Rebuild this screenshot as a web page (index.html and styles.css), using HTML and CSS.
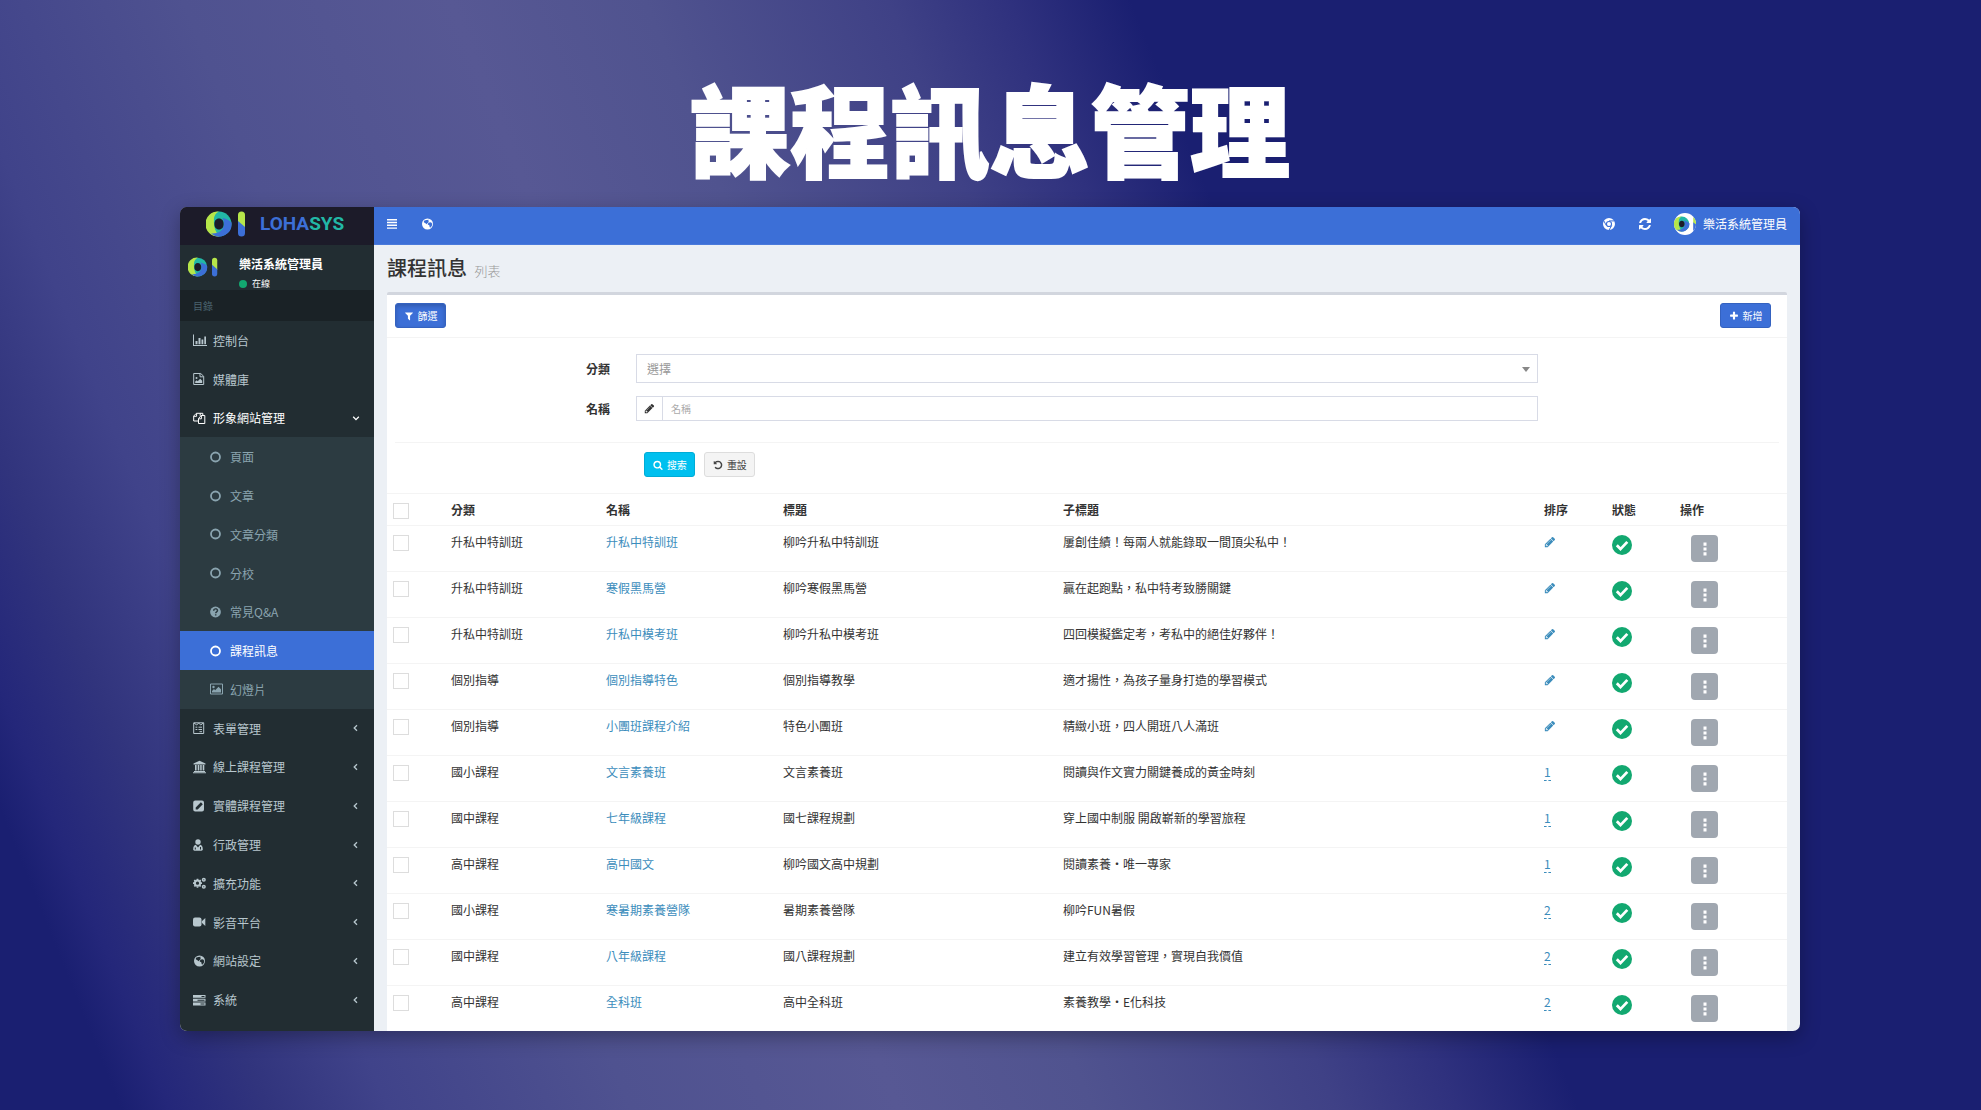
FILE: index.html
```html
<!DOCTYPE html>
<html lang="zh-Hant">
<head>
    <meta charset="UTF-8">
    <meta name="viewport" content="width=device-width, initial-scale=1.0">
    <title>課程訊息管理</title>
    <link rel="stylesheet" href="styles.css">
</head>
<body>
    <!-- icon sprite -->
    <svg class="sprite" aria-hidden="true">
        <symbol id="i-logo" viewBox="0 0 40 26">
            <circle cx="13" cy="13" r="12.5" fill="#22b8a6"/>
            <path d="M13 .5C10 2 7.500 5 8 10c-.5 5 1 10 5 15.400A12.500 12.500 0 1 1 13 .5z" fill="#b6e64a"/>
            <path d="M25.500 11.500A12.500 12.500 0 0 1 5 22.600c5 0 10-1 12-5.600 1.500-3 1-7-.5-10 3 .5 6.500 2 9 4.500z" fill="#3c6fd7"/>
            <path class="hole" d="M13 7.500c3 0 4.600 2.300 4.600 5.500s-1.600 5.500-4.600 5.500S8.400 16.200 8.400 13 10 7.500 13 7.500z"/>
            <path d="M32 4a3.500 3.500 0 0 1 7 0v13l-7-6z" fill="#b6e64a"/>
            <path d="M32 10l7 6v6a3.500 3.500 0 0 1-7 0z" fill="#3c6fd7"/>
        </symbol>
        <symbol id="i-bars" viewBox="0 0 14 14"><path d="M2 2h10v1.400H2zM2 4.800h10v1.400H2zM2 7.600h10v1.400H2zM2 10.400h10v1.400H2z"/></symbol>
        <symbol id="i-globe" viewBox="0 0 14 14"><path fill-rule="evenodd" d="M6.500 1.500a5.500 5.500 0 1 1 0 11 5.500 5.500 0 0 1 0-11zM5.200 3L3 3.800l-.2 1.500 1.600 1 1.400 1 .6-1 1.400-1.200-.6-1.600 1.200-.8zM9 5.200l-1.700.9-.6 1.500 1.600.7.400 2 1 .3 1.300-2 .2-1.900-1-1.200z"/></symbol>
        <symbol id="i-chrome" viewBox="0 0 14 14"><path fill-rule="evenodd" d="M7 1a6 6 0 1 1 0 12A6 6 0 0 1 7 1zm0 2.900a3.100 3.100 0 1 0 0 6.200 3.100 3.100 0 0 0 0-6.200zM7 5a2 2 0 1 1 0 4 2 2 0 0 1 0-4z"/><path class="cut" d="M7 3.900h5.400M4.300 8.500L1.900 4M9.700 8.500L7.100 13"/></symbol>
        <symbol id="i-refresh" viewBox="0 0 1792 1792"><path d="M1639 1056q0 5-1 7-64 268-268 434.500t-478 166.500q-146 0-282.500-55t-243.500-157l-129 129q-19 19-45 19t-45-19-19-45v-448q0-26 19-45t45-19h448q26 0 45 19t19 45-19 45l-137 137q71 66 161 102t187 36q134 0 250-65t186-179q11-17 53-117 8-23 30-23h192q13 0 22.500 9.500t9.500 22.500zm25-800v448q0 26-19 45t-45 19h-448q-26 0-45-19t-19-45 19-45l138-138q-148-137-349-137-134 0-250 65t-186 179q-11 17-53 117-8 23-30 23h-199q-13 0-22.500-9.500t-9.500-22.500v-7q65-268 270-434.500t480-166.500q146 0 284 55.500t245 156.500l130-129q19-19 45-19t45 19 19 45z"/></symbol>
        <symbol id="i-filter" viewBox="0 0 1792 1792"><path d="M1595 295q17 41-14 70l-493 493v742q0 42-39 59-13 5-25 5-27 0-45-19l-256-256q-19-19-19-45v-486l-493-493q-31-29-14-70 17-39 59-39h1280q42 0 59 39z"/></symbol>
        <symbol id="i-plus" viewBox="0 0 1792 1792"><path d="M1600 736v192q0 40-28 68t-68 28h-416v416q0 40-28 68t-68 28h-192q-40 0-68-28t-28-68v-416h-416q-40 0-68-28t-28-68v-192q0-40 28-68t68-28h416v-416q0-40 28-68t68-28h192q40 0 68 28t28 68v416h416q40 0 68 28t28 68z"/></symbol>
        <symbol id="i-search" viewBox="0 0 1792 1792"><path d="M1216 832q0-185-131.500-316.500t-316.500-131.500-316.500 131.500-131.500 316.500 131.500 316.500 316.500 131.500 316.500-131.500 131.500-316.500zm512 832q0 52-38 90t-90 38q-54 0-90-38l-343-342q-179 124-399 124-143 0-273.500-55.500t-225-150-150-225-55.500-273.500 55.500-273.500 150-225 225-150 273.500-55.500 273.500 55.500 225 150 150 225 55.500 273.500q0 220-124 399l343 343q37 37 37 90z"/></symbol>
        <symbol id="i-undo" viewBox="0 0 1792 1792"><path d="M1664 896q0 156-61 298t-164 245-245 164-298 61q-172 0-327-72.500t-264-204.500q-7-10-6.500-22.500t8.500-20.500l137-138q10-9 25-9 16 2 23 12 73 95 179 147t225 52q104 0 198.500-40.500t163.500-109.500 109.500-163.500 40.500-198.500-40.500-198.500-109.500-163.500-163.500-109.500-198.500-40.500q-98 0-188 35.500t-160 101.500l137 138q31 30 14 69-17 40-59 40h-448q-26 0-45-19t-19-45v-448q0-42 40-59 39-17 69 14l130 129q107-101 244.500-156.500t284.500-55.500q156 0 298 61t245 164 164 245 61 298z"/></symbol>
        <symbol id="i-pencil" viewBox="0 0 1792 1792"><path d="M491 1536l91-91-235-235-91 91v107h128v128h107zm523-928q0-22-22-22-10 0-17 7l-542 542q-7 7-7 17 0 22 22 22 10 0 17-7l542-542q7-7 7-17zm-54-192l416 416-832 832h-416v-416zm683 96q0 53-37 90l-166 166-416-416 166-165q36-38 90-38 53 0 91 38l235 234q37 39 37 91z"/></symbol>
        <symbol id="i-check" viewBox="0 0 20 20"><circle cx="10" cy="10" r="10"/><path d="M4.800 10.300l3.700 3.800 6.800-7.200" fill="none" stroke="#fff" stroke-width="2.800"/></symbol>
        <symbol id="i-dots" viewBox="0 0 4 14"><path d="M.5 .5h3v3.200h-3zM.5 5.400h3v3.200h-3zM.5 10.300h3v3.200h-3z"/></symbol>
        <symbol id="i-left" viewBox="0 0 14 14"><path class="line" stroke-width="1.300" d="M8 4.200L5.200 7 8 9.800"/></symbol>
        <symbol id="i-down" viewBox="0 0 14 14"><path class="line" stroke-width="1.300" d="M4.200 5.800L7 8.600l2.800-2.800"/></symbol>
        <symbol id="i-ring" viewBox="0 0 14 14"><circle class="line" cx="5.500" cy="7" r="4.500" stroke-width="1.800"/></symbol>
        <symbol id="i-question" viewBox="0 0 14 14"><circle cx="5.500" cy="7" r="5.400"/><path d="M3.700 5.700c0-2.400 3.800-2.400 3.800-.2 0 1.400-1.800 1.300-1.800 2.700M5.700 9.300v1.300" fill="none" stroke="#2c3b41" stroke-width="1.500"/></symbol>
        <symbol id="i-image" viewBox="0 0 14 14"><path class="line" d="M.5 2h12v10H.5z"/><circle cx="3.500" cy="5" r="1.200"/><path d="M2 10.500V9l2-2 1.200 1.200L8.500 4.800 11 7.300v3.200z"/></symbol>
        <symbol id="i-chart" viewBox="0 0 14 14"><path d="M0 1.500h1v10.500h13v1H0zM2.500 8h2v3.200h-2zM5.500 5h2v6.200h-2zM8.500 6.500h1.800v4.700H8.500zM11.300 3.500h1.700v7.700h-1.700z"/></symbol>
        <symbol id="i-file" viewBox="0 0 14 14"><path class="line" d="M.7 1.500h7l3 2.800v8.200H.7zM7 1.500v3.300h3.500"/><circle cx="3.500" cy="6" r="1"/><path d="M2.200 11V9.500l1.500-1.200 1 .9 2.500-2.400 2 1.900V11z"/></symbol>
        <symbol id="i-copy" viewBox="0 0 14 14"><path class="line" d="M5 10H.7V5l2.700-2.700h3.800v2.500M3.600 2.500v2.800H.9M5.500 12.500v-5L8.200 4.500h3.600v8zM8.400 4.500v3.300H5.500M7 2.300h2.800v2"/></symbol>
        <symbol id="i-form" viewBox="0 0 14 14"><path class="line" d="M.7 1.800h10v10.700h-10zM1 2l2.700 2 2-2 2 2 2.600-2M2.500 6.200h1.800M5.500 6.200H9M2.500 8.500h1.800M5.500 8.500H9M6.500 10.700H9"/></symbol>
        <symbol id="i-bank" viewBox="0 0 14 14"><path d="M6.500 .8L12.500 3.500v1H.5v-1zM2 5h1.600v5.500H2zM4.700 5h1.600v5.500H4.700zM7.200 5h1.500v5.500H7.200zM9.700 5h1.600v5.500H9.700zM1 11h11v1H1zM0 12.300h13v1H0z"/></symbol>
        <symbol id="i-edit" viewBox="0 0 14 14"><path fill-rule="evenodd" d="M2.200 1.500h6.800A2 2 0 0 1 11 3.500v7a2 2 0 0 1-2 2H2.200a2 2 0 0 1-2-2v-7a2 2 0 0 1 2-2zM7.900 3.200L2.700 8.500v2h2l5.100-5.300z"/></symbol>
        <symbol id="i-user" viewBox="0 0 14 14"><circle cx="5" cy="4" r="2.700"/><path fill-rule="evenodd" d="M2.800 6.800C1 7.200.2 8.600.2 11.500c0 .7.600 1.200 1.300 1.200h7c.7 0 1.300-.5 1.300-1.200 0-2.900-.8-4.300-2.600-4.700L5 9.500zM1.800 9.500h1v2h-1zM7 9h1v2.500H7z"/></symbol>
        <symbol id="i-cogs" viewBox="0 0 14 14"><circle class="line" cx="4.500" cy="7.200" r="2.600" stroke-width="2"/><path class="line" stroke-width="1.700" d="M4.500 2.700v1.300M4.500 10.400v1.300M0 7.200h1.300M7.700 7.200H9M1.300 4l.9.900M6.800 9.500l.9.900M7.700 4l-.9.900M2.200 9.500l-.9.900"/><circle class="line" cx="10.800" cy="3.700" r="1.300" stroke-width="1.500"/><circle class="line" cx="10.800" cy="10.700" r="1.300" stroke-width="1.500"/></symbol>
        <symbol id="i-video" viewBox="0 0 14 14"><rect y="2.500" width="8.500" height="9" rx="2"/><path d="M8.800 6.200L12.300 3v8L8.800 7.800z"/></symbol>
        <symbol id="i-server" viewBox="0 0 14 14"><path fill-rule="evenodd" d="M0 2h12.500v2.800H0zM8.500 2.900h3v1h-3zM0 5.800h12.500v2.800H0zM4.500 6.700h7v1h-7zM0 9.600h12.500v2.800H0zM7.500 10.500h4v1h-4z"/></symbol>
    </svg>

    <h1 class="page-title">課程訊息管理</h1>

    <div class="window">
        <aside class="sidebar">
            <a class="brand" href="#">
                <svg class="brand-logo"><use href="#i-logo"/></svg>
                <span class="brand-name">LOHA<span>SYS</span></span>
            </a>
            <div class="user-panel">
                <svg class="user-logo"><use href="#i-logo"/></svg>
                <div>
                    <p class="user-name">樂活系統管理員</p>
                    <a class="user-status" href="#"><i></i>在線</a>
                </div>
            </div>
            <div class="menu-header">目錄</div>
            <ul class="menu">
                <li><a href="#"><svg class="icon"><use href="#i-chart"/></svg>控制台</a></li>
                <li><a href="#"><svg class="icon"><use href="#i-file"/></svg>媒體庫</a></li>
                <li class="open"><a href="#"><svg class="icon"><use href="#i-copy"/></svg>形象網站管理<svg class="icon arrow"><use href="#i-down"/></svg></a></li>
                <li class="sub"><a href="#"><svg class="icon"><use href="#i-ring"/></svg>頁面</a></li>
                <li class="sub"><a href="#"><svg class="icon"><use href="#i-ring"/></svg>文章</a></li>
                <li class="sub"><a href="#"><svg class="icon"><use href="#i-ring"/></svg>文章分類</a></li>
                <li class="sub"><a href="#"><svg class="icon"><use href="#i-ring"/></svg>分校</a></li>
                <li class="sub"><a href="#"><svg class="icon"><use href="#i-question"/></svg>常見Q&amp;A</a></li>
                <li class="sub active"><a href="#"><svg class="icon"><use href="#i-ring"/></svg>課程訊息</a></li>
                <li class="sub"><a href="#"><svg class="icon"><use href="#i-image"/></svg>幻燈片</a></li>
                <li><a href="#"><svg class="icon"><use href="#i-form"/></svg>表單管理<svg class="icon arrow"><use href="#i-left"/></svg></a></li>
                <li><a href="#"><svg class="icon"><use href="#i-bank"/></svg>線上課程管理<svg class="icon arrow"><use href="#i-left"/></svg></a></li>
                <li><a href="#"><svg class="icon"><use href="#i-edit"/></svg>實體課程管理<svg class="icon arrow"><use href="#i-left"/></svg></a></li>
                <li><a href="#"><svg class="icon"><use href="#i-user"/></svg>行政管理<svg class="icon arrow"><use href="#i-left"/></svg></a></li>
                <li><a href="#"><svg class="icon"><use href="#i-cogs"/></svg>擴充功能<svg class="icon arrow"><use href="#i-left"/></svg></a></li>
                <li><a href="#"><svg class="icon"><use href="#i-video"/></svg>影音平台<svg class="icon arrow"><use href="#i-left"/></svg></a></li>
                <li><a href="#"><svg class="icon"><use href="#i-globe"/></svg>網站設定<svg class="icon arrow"><use href="#i-left"/></svg></a></li>
                <li><a href="#"><svg class="icon"><use href="#i-server"/></svg>系統<svg class="icon arrow"><use href="#i-left"/></svg></a></li>
            </ul>
        </aside>

        <main class="main">
            <nav class="topbar">
                <a href="#" aria-label="選單"><svg class="icon"><use href="#i-bars"/></svg></a>
                <a href="#" aria-label="網站"><svg class="icon"><use href="#i-globe"/></svg></a>
                <a class="push" href="#" aria-label="瀏覽器"><svg class="icon"><use href="#i-chrome"/></svg></a>
                <a href="#" aria-label="重新整理"><svg class="icon"><use href="#i-refresh"/></svg></a>
                <a class="account" href="#"><span class="avatar"><svg><use href="#i-logo"/></svg></span>樂活系統管理員</a>
            </nav>

            <header class="content-header">
                <h2>課程訊息 <small>列表</small></h2>
            </header>

            <section class="box">
                <div class="box-header">
                    <button class="btn btn-primary pressed" type="button"><svg class="icon"><use href="#i-filter"/></svg>篩選</button>
                    <button class="btn btn-primary" type="button"><svg class="icon"><use href="#i-plus"/></svg>新增</button>
                </div>

                <form class="filter">
                    <div class="field">
                        <label for="category">分類</label>
                        <div class="select">
                            <select id="category"><option>選擇</option></select>
                        </div>
                    </div>
                    <div class="field">
                        <label for="name">名稱</label>
                        <div class="input-group">
                            <span class="addon"><svg class="icon"><use href="#i-pencil"/></svg></span>
                            <input type="text" id="name" placeholder="名稱">
                        </div>
                    </div>
                    <div class="filter-footer">
                        <button class="btn btn-info" type="button"><svg class="icon"><use href="#i-search"/></svg>搜索</button>
                        <button class="btn btn-default" type="reset"><svg class="icon"><use href="#i-undo"/></svg>重設</button>
                    </div>
                </form>

                <table class="grid">
                    <colgroup>
                        <col class="c-check"><col class="c-cat"><col class="c-name"><col class="c-title"><col><col class="c-num"><col class="c-num"><col class="c-act">
                    </colgroup>
                    <thead>
                        <tr>
                            <th><input type="checkbox" aria-label="全選"></th>
                            <th>分類</th>
                            <th>名稱</th>
                            <th>標題</th>
                            <th>子標題</th>
                            <th>排序</th>
                            <th>狀態</th>
                            <th>操作</th>
                        </tr>
                    </thead>
                    <tbody>
                        <tr>
                            <td><input type="checkbox" aria-label="選取"></td>
                            <td>升私中特訓班</td>
                            <td><a href="#">升私中特訓班</a></td>
                            <td>柳吟升私中特訓班</td>
                            <td>屢創佳績！每兩人就能錄取一間頂尖私中！</td>
                            <td><a href="#" aria-label="編輯"><svg class="icon"><use href="#i-pencil"/></svg></a></td>
                            <td><svg class="check"><use href="#i-check"/></svg></td>
                            <td><button class="more" type="button" aria-label="操作"><svg><use href="#i-dots"/></svg></button></td>
                        </tr>
                        <tr>
                            <td><input type="checkbox" aria-label="選取"></td>
                            <td>升私中特訓班</td>
                            <td><a href="#">寒假黑馬營</a></td>
                            <td>柳吟寒假黑馬營</td>
                            <td>贏在起跑點，私中特考致勝關鍵</td>
                            <td><a href="#" aria-label="編輯"><svg class="icon"><use href="#i-pencil"/></svg></a></td>
                            <td><svg class="check"><use href="#i-check"/></svg></td>
                            <td><button class="more" type="button" aria-label="操作"><svg><use href="#i-dots"/></svg></button></td>
                        </tr>
                        <tr>
                            <td><input type="checkbox" aria-label="選取"></td>
                            <td>升私中特訓班</td>
                            <td><a href="#">升私中模考班</a></td>
                            <td>柳吟升私中模考班</td>
                            <td>四回模擬鑑定考，考私中的絕佳好夥伴！</td>
                            <td><a href="#" aria-label="編輯"><svg class="icon"><use href="#i-pencil"/></svg></a></td>
                            <td><svg class="check"><use href="#i-check"/></svg></td>
                            <td><button class="more" type="button" aria-label="操作"><svg><use href="#i-dots"/></svg></button></td>
                        </tr>
                        <tr>
                            <td><input type="checkbox" aria-label="選取"></td>
                            <td>個別指導</td>
                            <td><a href="#">個別指導特色</a></td>
                            <td>個別指導教學</td>
                            <td>適才揚性，為孩子量身打造的學習模式</td>
                            <td><a href="#" aria-label="編輯"><svg class="icon"><use href="#i-pencil"/></svg></a></td>
                            <td><svg class="check"><use href="#i-check"/></svg></td>
                            <td><button class="more" type="button" aria-label="操作"><svg><use href="#i-dots"/></svg></button></td>
                        </tr>
                        <tr>
                            <td><input type="checkbox" aria-label="選取"></td>
                            <td>個別指導</td>
                            <td><a href="#">小團班課程介紹</a></td>
                            <td>特色小團班</td>
                            <td>精緻小班，四人開班八人滿班</td>
                            <td><a href="#" aria-label="編輯"><svg class="icon"><use href="#i-pencil"/></svg></a></td>
                            <td><svg class="check"><use href="#i-check"/></svg></td>
                            <td><button class="more" type="button" aria-label="操作"><svg><use href="#i-dots"/></svg></button></td>
                        </tr>
                        <tr>
                            <td><input type="checkbox" aria-label="選取"></td>
                            <td>國小課程</td>
                            <td><a href="#">文言素養班</a></td>
                            <td>文言素養班</td>
                            <td>閱讀與作文實力關鍵養成的黃金時刻</td>
                            <td><a class="order" href="#">1</a></td>
                            <td><svg class="check"><use href="#i-check"/></svg></td>
                            <td><button class="more" type="button" aria-label="操作"><svg><use href="#i-dots"/></svg></button></td>
                        </tr>
                        <tr>
                            <td><input type="checkbox" aria-label="選取"></td>
                            <td>國中課程</td>
                            <td><a href="#">七年級課程</a></td>
                            <td>國七課程規劃</td>
                            <td>穿上國中制服 開啟嶄新的學習旅程</td>
                            <td><a class="order" href="#">1</a></td>
                            <td><svg class="check"><use href="#i-check"/></svg></td>
                            <td><button class="more" type="button" aria-label="操作"><svg><use href="#i-dots"/></svg></button></td>
                        </tr>
                        <tr>
                            <td><input type="checkbox" aria-label="選取"></td>
                            <td>高中課程</td>
                            <td><a href="#">高中國文</a></td>
                            <td>柳吟國文高中規劃</td>
                            <td>閱讀素養‧唯一專家</td>
                            <td><a class="order" href="#">1</a></td>
                            <td><svg class="check"><use href="#i-check"/></svg></td>
                            <td><button class="more" type="button" aria-label="操作"><svg><use href="#i-dots"/></svg></button></td>
                        </tr>
                        <tr>
                            <td><input type="checkbox" aria-label="選取"></td>
                            <td>國小課程</td>
                            <td><a href="#">寒暑期素養營隊</a></td>
                            <td>暑期素養營隊</td>
                            <td>柳吟FUN暑假</td>
                            <td><a class="order" href="#">2</a></td>
                            <td><svg class="check"><use href="#i-check"/></svg></td>
                            <td><button class="more" type="button" aria-label="操作"><svg><use href="#i-dots"/></svg></button></td>
                        </tr>
                        <tr>
                            <td><input type="checkbox" aria-label="選取"></td>
                            <td>國中課程</td>
                            <td><a href="#">八年級課程</a></td>
                            <td>國八課程規劃</td>
                            <td>建立有效學習管理，實現自我價值</td>
                            <td><a class="order" href="#">2</a></td>
                            <td><svg class="check"><use href="#i-check"/></svg></td>
                            <td><button class="more" type="button" aria-label="操作"><svg><use href="#i-dots"/></svg></button></td>
                        </tr>
                        <tr>
                            <td><input type="checkbox" aria-label="選取"></td>
                            <td>高中課程</td>
                            <td><a href="#">全科班</a></td>
                            <td>高中全科班</td>
                            <td>素養教學‧E化科技</td>
                            <td><a class="order" href="#">2</a></td>
                            <td><svg class="check"><use href="#i-check"/></svg></td>
                            <td><button class="more" type="button" aria-label="操作"><svg><use href="#i-dots"/></svg></button></td>
                        </tr>
                    </tbody>
                </table>
            </section>
        </main>
    </div>
</body>
</html>
```

FILE: styles.css
```css
* {
    box-sizing: border-box;
}
body {
    margin: 0;
    min-height: 100vh;
    padding: 75px 181px 78px 180px;
    background: linear-gradient(68deg, #1a1f71 5%, #24277a 7%, #31347d 11%, #40438a 16%, #4f5290 26%, #575894 37%, #50538f 45%, #3f4186 55%, #2f317e 60%, #1a1f71 65%);
    font-family: "Noto Sans CJK TC", sans-serif;
    font-size: 12px;
    line-height: 17px;
    color: #333;
}
a {
    color: #3c8dbc;
    text-decoration: none;
}
button, input, select {
    font-family: inherit;
}
.sprite {
    position: absolute;
    width: 0;
    height: 0;
}
.icon {
    width: 14px;
    height: 14px;
    flex: none;
    fill: currentColor;
}
.line {
    fill: none;
    stroke: currentColor;
}
.cut {
    fill: none;
    stroke: #3c6fd7;
}
.hole {
    fill: #1c1b29;
}
.page-title {
    margin: 0 0 28px;
    font-size: 100px;
    line-height: 104px;
    font-weight: 900;
    text-align: center;
    color: #fff;
    -webkit-text-stroke: 2px #fff;
}
.window {
    display: flex;
    border-radius: 7px;
    overflow: hidden;
    background: #ecf0f5;
    box-shadow: 0 6px 20px rgba(0, 0, 0, 0.3);
}

/* sidebar */
.sidebar {
    width: 194px;
    flex: none;
    display: flex;
    flex-direction: column;
    background: #222d32;
}
.brand {
    display: flex;
    align-items: center;
    height: 38px;
    padding: 0 26px 4px;
    gap: 14px;
    background: #1c1b29;
}
.brand-logo {
    width: 40px;
    height: 26px;
}
.brand-name {
    font-family: "Liberation Sans Narrow", Roboto, sans-serif;
    font-size: 19px;
    line-height: 30px;
    font-weight: 700;
    color: #3c6fd7;
}
.brand-name span {
    color: #22b8a6;
}
.user-panel {
    display: flex;
    height: 45px;
    padding: 10px 8px 0;
    gap: 21px;
    color: #fff;
}
.user-logo {
    width: 30px;
    height: 20px;
    margin-top: 2px;
}
.user-name {
    margin: 0 0 3px;
    font-weight: 600;
}
.user-status {
    display: flex;
    align-items: center;
    gap: 5px;
    color: #fff;
    font-size: 9px;
    line-height: 17px;
}
.user-status i {
    width: 8px;
    height: 8px;
    border-radius: 50%;
    background: #12a870;
}
.menu-header {
    padding: 0 13px;
    font-size: 10px;
    line-height: 31px;
    color: #4b646f;
    background: #1a2226;
}
.menu {
    flex: 1;
    display: flex;
    flex-direction: column;
    margin: 0;
    padding: 0 0 12px;
    list-style: none;
}
.menu li {
    flex: 1;
    display: flex;
}
.menu a {
    flex: 1;
    display: flex;
    align-items: center;
    gap: 6px;
    padding: 0 11px 0 13px;
    color: #b8c7ce;
}
.menu .open a {
    color: #fff;
}
.menu .sub {
    background: #2c3b41;
}
.menu .sub a {
    padding-left: 30px;
    color: #8aa4af;
}
.menu .active {
    background: #3c6fd7;
}
.menu .active a {
    color: #fff;
}
.menu .arrow {
    margin-left: auto;
}

/* main area */
.main {
    flex: 1;
    min-width: 0;
}
.topbar {
    display: flex;
    align-items: center;
    height: 38px;
    padding: 0 13px 4px 11px;
    gap: 22px;
    background: #3c6fd7;
    border-bottom: 1px solid #4a7adb;
}
.topbar a {
    display: flex;
    align-items: center;
    color: #fff;
}
.topbar .push {
    margin-left: auto;
}
.account {
    gap: 7px;
}
.avatar {
    display: flex;
    align-items: center;
    width: 22px;
    height: 22px;
    border-radius: 50%;
    overflow: hidden;
    background: #fff;
}
.avatar svg {
    flex: none;
    width: 24px;
    height: 16px;
}
.avatar .hole {
    fill: #fff;
}
.content-header {
    padding: 9px 13px 0;
    height: 47px;
}
.content-header h2 {
    margin: 0;
    font-size: 20px;
    line-height: 28px;
    font-weight: 500;
}
.content-header small {
    margin-left: 3px;
    font-size: 13px;
    font-weight: 300;
    color: #999;
}
.box {
    margin: 0 13px;
    background: #fff;
    border-top: 3px solid #d2d6de;
    border-radius: 2px 2px 0 0;
}
.box-header {
    display: flex;
    justify-content: space-between;
    padding: 8px 16px 9px 8px;
    border-bottom: 1px solid #f4f4f4;
}
.btn {
    display: flex;
    align-items: center;
    justify-content: center;
    gap: 4px;
    height: 25px;
    min-width: 51px;
    padding: 0 7px;
    border: 1px solid;
    border-radius: 3px;
    font-size: 10px;
    line-height: 15px;
}
.btn .icon {
    width: 10px;
    height: 10px;
}
.btn-primary {
    color: #fff;
    background: #3c6fd7;
    border-color: #3462c0;
}
.pressed {
    box-shadow: inset 0 2px 4px rgba(0, 0, 0, 0.2);
}
.btn-info {
    color: #fff;
    background: #00c0ef;
    border-color: #00acd6;
}
.btn-default {
    color: #444;
    background: #f4f4f4;
    border-color: #ddd;
}
.filter {
    padding: 16px 0;
}
.field {
    display: grid;
    grid-template-columns: 2fr 8fr 2fr;
    align-items: center;
    margin: 0 4px 13px;
}
.field label {
    padding-right: 13px;
    text-align: right;
    font-weight: 600;
}
.select, .input-group {
    margin: 0 13px;
    border: 1px solid #d8dbe6;
}
.select {
    position: relative;
}
.select::after {
    content: "";
    position: absolute;
    right: 7px;
    top: 12px;
    border: 4px solid transparent;
    border-top: 5px solid #888;
    border-bottom: 0;
}
.select select {
    display: block;
    width: 100%;
    height: 27px;
    padding: 0 10px;
    border: 0;
    appearance: none;
    background: #fff;
    font-size: 12px;
    color: #999;
}
.input-group {
    display: flex;
    height: 25px;
}
.addon {
    display: flex;
    align-items: center;
    justify-content: center;
    width: 26px;
    border-right: 1px solid #d8dbe6;
}
.addon .icon {
    width: 11px;
    height: 11px;
}
.input-group input {
    flex: 1;
    border: 0;
    padding: 0 8px;
    font-size: 10px;
}
.input-group input::placeholder {
    color: #aaa;
}
.filter-footer {
    display: flex;
    gap: 9px;
    margin: 21px 8px 0;
    padding: 9px 0 0 calc(16.67% + 16px);
    border-top: 1px solid #f4f4f4;
}

/* list */
.grid {
    width: 100%;
    table-layout: fixed;
    border-collapse: separate;
    border-spacing: 0;
}
.c-check { width: 58px; }
.c-cat { width: 155px; }
.c-name { width: 177px; }
.c-title { width: 280px; }
.c-num { width: 68px; }
.c-act { width: 113px; }
.grid tr {
    height: 46px;
}
.grid thead tr {
    height: 32px;
}
.grid th, .grid td {
    padding: 7px 6px 0;
    text-align: left;
    vertical-align: top;
    border-top: 1px solid #f4f4f4;
}
.grid th {
    font-weight: 600;
}
.grid input {
    display: block;
    width: 16px;
    height: 16px;
    margin: 2px 0 0;
    appearance: none;
    border: 1px solid #ddd;
    background: #fff;
}
.grid .icon {
    display: block;
    width: 12px;
    height: 12px;
    margin-top: 3px;
}
.order {
    border-bottom: 1px dashed #3c8dbc;
}
.check {
    display: block;
    width: 20px;
    height: 20px;
    margin-top: 2px;
    fill: #12a870;
}
.more {
    display: flex;
    align-items: center;
    justify-content: center;
    width: 27px;
    height: 27px;
    margin: 2px 0 0 11px;
    padding: 0;
    border: 0;
    border-radius: 4px;
    background: #a0a7b0;
}
.more svg {
    width: 4px;
    height: 14px;
    fill: #fff;
}
```
